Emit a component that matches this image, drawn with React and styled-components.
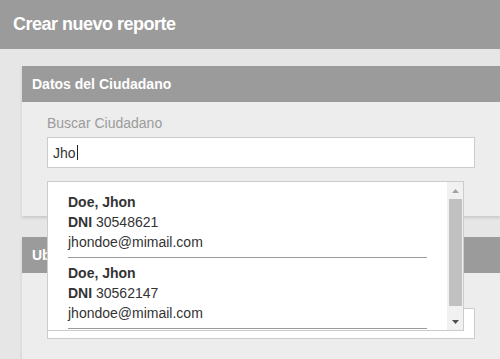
import React from "react";
import styled, { createGlobalStyle } from "styled-components";

const GlobalStyle = createGlobalStyle`
  html, body {
    margin: 0;
    padding: 0;
    background: #e6e6e6;
    font-family: "Liberation Sans", Arial, sans-serif;
  }
  * { box-sizing: border-box; }
`;

const Page = styled.div`
  height: 359px;
  background: #e6e6e6;
  overflow: hidden;
`;

const TopBar = styled.header`
  height: 49px;
  background: #9b9b9b;
  color: #fff;
  padding-left: 13px;
  font-size: 18px;
  font-weight: bold;
  line-height: 49px;
  letter-spacing: -0.5px;
`;

const Content = styled.main`
  display: flex;
  flex-direction: column;
  gap: 21px;
  padding: 17px 0 0 22px;
`;

const Card = styled.section`
  background: #ededed;
  box-shadow: 0 2px 3px rgba(0, 0, 0, 0.13);
`;

const CardHeader = styled.h2`
  margin: 0;
  height: 36px;
  padding: 0 10px;
  background: #9b9b9b;
  color: #fff;
  font-size: 14px;
  font-weight: bold;
  line-height: 36px;
`;

const CardBody = styled.div`
  padding: ${(p) => (p.$noLabel ? "35px" : "13px")} 25px 48px;
`;

const Label = styled.div`
  color: #9b9b9b;
  font-size: 14px;
  line-height: 16px;
  margin-bottom: 6px;
`;

const FieldWrap = styled.div`
  position: relative;
`;

const Field = styled.div`
  height: 31px;
  border: 1px solid #cccccc;
  background: #fff;
  padding: 0 5px;
  display: flex;
  align-items: center;
  color: #333;
  font-size: 14px;
`;

const Caret = styled.span`
  display: inline-block;
  width: 1px;
  height: 15px;
  margin-left: 1px;
  background: #222;
`;

const Dropdown = styled.div`
  position: absolute;
  z-index: 10;
  top: 44px;
  left: 0;
  width: 417px;
  height: 150px;
  border: 1px solid #cccccc;
  background: #fff;
  display: flex;
`;

const List = styled.ul`
  flex: 1;
  margin: 0;
  padding: 5px 20px 0;
  list-style: none;
  overflow: hidden;
`;

const Item = styled.li`
  padding: 5px 0;
  border-bottom: 1px solid #9b9b9b;
  color: #333;
  font-size: 14px;
  line-height: 20px;
`;

const Name = styled.div`
  font-weight: bold;
`;

const Strong = styled.b`
  font-weight: bold;
`;

const Scrollbar = styled.div`
  width: 16px;
  background: #f1f1f1;
  display: flex;
  flex-direction: column;
`;

const ScrollButton = styled.div`
  height: 17px;
  display: flex;
  align-items: center;
  justify-content: center;
  flex-shrink: 0;
`;

const Track = styled.div`
  flex: 1;
  display: flex;
  flex-direction: column;
`;

const Thumb = styled.div`
  height: 107px;
  margin: 0 1px 0 2px;
  background: #c1c1c1;
`;

const Arrow = ({ up, color }) => (
  <svg width="7" height="4" viewBox="0 0 7 4">
    {up ? (
      <polygon points="0,4 7,4 3.5,0" fill={color} />
    ) : (
      <polygon points="0,0 7,0 3.5,4" fill={color} />
    )}
  </svg>
);

const results = [
  { name: "Doe, Jhon", dni: "30548621", email: "jhondoe@mimail.com" },
  { name: "Doe, Jhon", dni: "30562147", email: "jhondoe@mimail.com" },
];

export default function App() {
  return (
    <Page>
      <GlobalStyle />
      <TopBar>Crear nuevo reporte</TopBar>
      <Content>
        <Card>
          <CardHeader>Datos del Ciudadano</CardHeader>
          <CardBody>
            <Label>Buscar Ciudadano</Label>
            <FieldWrap>
              <Field>
                Jho
                <Caret />
              </Field>
              <Dropdown>
                <List>
                  {results.map((r, i) => (
                    <Item key={i}>
                      <Name>{r.name}</Name>
                      <div>
                        <Strong>DNI</Strong> {r.dni}
                      </div>
                      <div>{r.email}</div>
                    </Item>
                  ))}
                </List>
                <Scrollbar>
                  <ScrollButton>
                    <Arrow up color="#a3a3a3" />
                  </ScrollButton>
                  <Track>
                    <Thumb />
                  </Track>
                  <ScrollButton>
                    <Arrow color="#505050" />
                  </ScrollButton>
                </Scrollbar>
              </Dropdown>
            </FieldWrap>
          </CardBody>
        </Card>
        <Card>
          <CardHeader>Ubicación</CardHeader>
          <CardBody $noLabel>
            <Field />
          </CardBody>
        </Card>
      </Content>
    </Page>
  );
}
